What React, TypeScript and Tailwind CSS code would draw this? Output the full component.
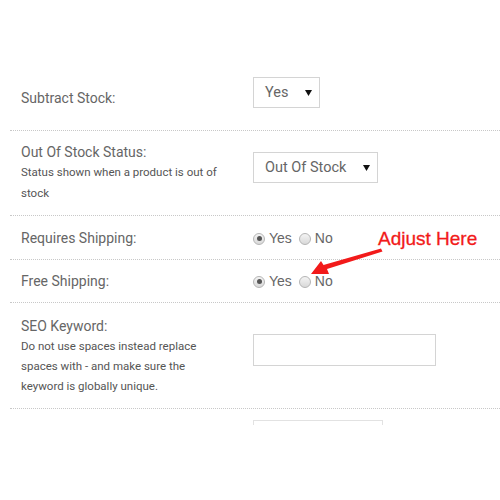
const label = "text-[14px] text-[#666] leading-[20px]";
const hint = "text-[11.5px] text-[#555] leading-[21px]";

function FakeSelect({ value, width }: { value: string; width: string }) {
  return (
    <div
      className={`${width} h-[31px] border border-[#d4d4d4] bg-white flex items-center justify-between pl-[11px] pr-[7px] text-[14.5px] text-[#666]`}
    >
      <span>{value}</span>
      <svg width="7" height="6" viewBox="0 0 7 6">
        <path d="M0 0h7L3.5 6z" fill="#111" />
      </svg>
    </div>
  );
}

function Radio({ checked }: { checked?: boolean }) {
  return (
    <span className="w-[12px] h-[12px] rounded-full border border-[#b5b5b5] bg-gradient-to-b from-[#f4f4f4] to-[#d9d9d9] flex items-center justify-center">
      {checked && <span className="w-[5px] h-[5px] rounded-full bg-[#555]" />}
    </span>
  );
}

function YesNo() {
  return (
    <div className="flex items-center gap-[4px] text-[14px] text-[#666] font-['Liberation_Sans',Arial,sans-serif]">
      <Radio checked />
      <span className="mr-[3px]">Yes</span>
      <Radio />
      <span>No</span>
    </div>
  );
}

export default function App() {
  return (
    <div className="relative w-[500px] h-[500px] bg-white overflow-hidden pt-[65px] pl-[10px] font-['Roboto',Arial,sans-serif]">
      <div className="flex h-[66px] border-b border-dotted border-[#c8c8c8]">
        <div className="w-[243px] pl-[11px] flex flex-col justify-center pt-[1px]">
          <span className={label}>Subtract Stock:</span>
        </div>
        <div className="pt-[12px]">
          <FakeSelect value="Yes" width="w-[67px]" />
        </div>
      </div>

      <div className="flex h-[85px] border-b border-dotted border-[#c8c8c8]">
        <div className="w-[243px] pl-[11px] pr-[20px] flex flex-col justify-center">
          <span className={label}>Out Of Stock Status:</span>
          <span className={hint}>Status shown when a product is out of stock</span>
        </div>
        <div className="pt-[21px]">
          <FakeSelect value="Out Of Stock" width="w-[125px]" />
        </div>
      </div>

      <div className="flex h-[44px] border-b border-dotted border-[#c8c8c8]">
        <div className="w-[243px] pl-[11px] flex flex-col justify-center">
          <span className={label}>Requires Shipping:</span>
        </div>
        <div className="flex items-center pt-[2px]">
          <YesNo />
        </div>
      </div>

      <div className="flex h-[43px] border-b border-dotted border-[#c8c8c8]">
        <div className="w-[243px] pl-[11px] flex flex-col justify-center">
          <span className={label}>Free Shipping:</span>
        </div>
        <div className="flex items-center pt-[1px]">
          <YesNo />
        </div>
      </div>

      <div className="flex h-[106px] border-b border-dotted border-[#c8c8c8]">
        <div className="w-[243px] pl-[11px] pr-[30px] flex flex-col justify-center">
          <span className={label}>SEO Keyword:</span>
          <span className="text-[11.5px] text-[#555] leading-[20px]">
            Do not use spaces instead replace spaces with - and make sure the keyword is globally unique.
          </span>
        </div>
        <div className="pt-[31px]">
          <div className="w-[183px] h-[32px] border border-[#d4d4d4] bg-white" />
        </div>
      </div>

      <div className="flex">
        <div className="w-[243px]" />
        <div className="pt-[11px]">
          <div className="w-[130px] h-[5px] border-t border-l border-r border-[#e2e2e2]" />
        </div>
      </div>

      <span className="absolute left-[378px] top-[228px] text-[19px] leading-[22px] text-[#f21a1a] font-['Liberation_Sans',Arial,sans-serif] [-webkit-text-stroke:0.3px_#f21a1a]">
        Adjust Here
      </span>
      <svg className="absolute left-0 top-0" width="500" height="500" viewBox="0 0 500 500">
        <path d="M381 248.5L382.5 251.5L327 269L329 274L311 274L321 261L323.5 265Z" fill="#f21a1a" />
      </svg>
    </div>
  );
}
